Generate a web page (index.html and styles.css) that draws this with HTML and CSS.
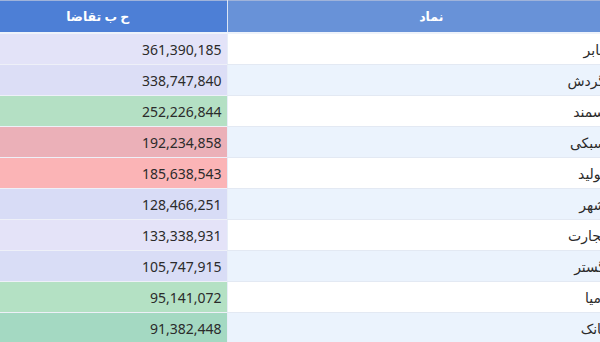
FILE: index.html
```html
<!DOCTYPE html>
<html lang="fa">
<head>
<meta charset="utf-8">
<link rel="stylesheet" href="styles.css">
</head>
<body>
<table class="grid" dir="rtl">
  <colgroup>
    <col class="col-sym">
    <col class="col-val">
  </colgroup>
  <thead>
    <tr>
      <th class="h-sym">نماد</th>
      <th class="h-val">ح ب تقاضا</th>
    </tr>
  </thead>
  <tbody>
    <tr><td class="sym">اخابر</td><td class="val c1">361,390,185</td></tr>
    <tr><td class="sym">وگردش</td><td class="val c2">338,747,840</td></tr>
    <tr><td class="sym">فسمند</td><td class="val c3">252,226,844</td></tr>
    <tr><td class="sym">وسبکی</td><td class="val c4">192,234,858</td></tr>
    <tr><td class="sym">کتولید</td><td class="val c5">185,638,543</td></tr>
    <tr><td class="sym">وشهر</td><td class="val c6">128,466,251</td></tr>
    <tr><td class="sym">وتجارت</td><td class="val c7">133,338,931</td></tr>
    <tr><td class="sym">وگستر</td><td class="val c8">105,747,915</td></tr>
    <tr><td class="sym">کامیا</td><td class="val c9">95,141,072</td></tr>
    <tr><td class="sym">وبانک</td><td class="val c10">91,382,448</td></tr>
  </tbody>
</table>
</body>
</html>
```
FILE: styles.css
```css
html, body {
  margin: 0;
  padding: 0;
  overflow: hidden;
  background: #ffffff;
}
body {
  width: 600px;
  height: 342px;
  direction: ltr;
  font-family: "Noto Sans", "DejaVu Sans", sans-serif;
  color: #2b2b2b;
}
.grid {
  direction: rtl;
  width: 620px;
  min-width: 620px;
  table-layout: fixed;
  border-collapse: collapse;
  border-top: 1px solid #9fb3da;
}
.col-sym { width: 393px; }
.col-val { width: 227px; }
.grid th {
  height: 31px;
  padding: 0;
  color: #ffffff;
  font-size: 12.5px;
  font-weight: bold;
  border-bottom: 2px solid #eef3fb;
}
.h-sym {
  background: #6892d8;
  text-align: center;
  padding-left: 15px !important;
}
.h-val {
  background: #4d7fd6;
  text-align: center;
  padding-right: 31px !important;
  border-right: 1px solid #dbe5f5;
}
.grid td {
  height: 30px;
  padding: 0;
  font-size: 14px;
  border-bottom: 1px solid #e3e9f3;
}
.sym {
  text-align: right;
  padding-right: 8px !important;
  white-space: nowrap;
  overflow: hidden;
}
tbody tr:nth-child(odd) .sym { background: #ffffff; }
tbody tr:nth-child(even) .sym { background: #ebf3fd; }
.val {
  text-align: right;
  padding-right: 5px !important;
  direction: ltr;
  font-size: 12px;
  border-right: 1px solid #e8eef8;
  border-bottom-color: #eef0f8 !important;
}
.c1 { background: #e3e3f8; }
.c2 { background: #dcdef6; }
.c3 { background: #b4e0c4; }
.c4 { background: #ebb0b8; }
.c5 { background: #fbb4b6; }
.c6 { background: #d8dcf6; }
.c7 { background: #e4e3f8; }
.c8 { background: #d9ddf6; }
.c9 { background: #b4e1c4; }
.c10 { background: #a4d9c2; }
```
